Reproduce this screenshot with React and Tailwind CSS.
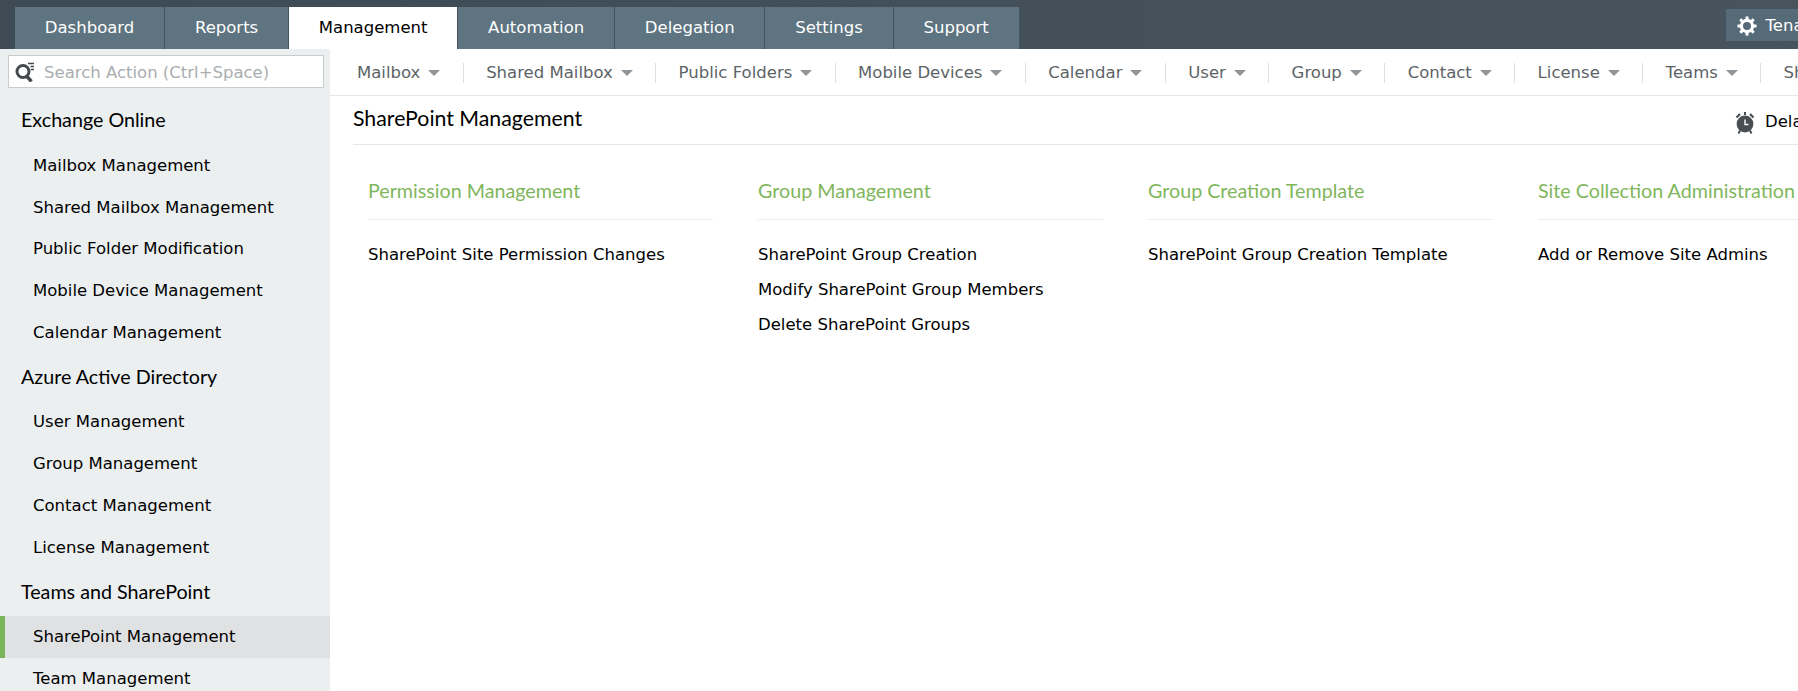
import React from 'react';

const TABS = ['Dashboard', 'Reports', 'Management', 'Automation', 'Delegation', 'Settings', 'Support'];
const SUBNAV = ['Mailbox', 'Shared Mailbox', 'Public Folders', 'Mobile Devices', 'Calendar', 'User', 'Group', 'Contact', 'License', 'Teams', 'SharePoint'];

const SIDEBAR = [
  { title: 'Exchange Online', items: ['Mailbox Management', 'Shared Mailbox Management', 'Public Folder Modification', 'Mobile Device Management', 'Calendar Management'] },
  { title: 'Azure Active Directory', items: ['User Management', 'Group Management', 'Contact Management', 'License Management'] },
  { title: 'Teams and SharePoint', items: ['SharePoint Management', 'Team Management'] },
];

const COLUMNS = [
  { title: 'Permission Management', items: ['SharePoint Site Permission Changes'] },
  { title: 'Group Management', items: ['SharePoint Group Creation', 'Modify SharePoint Group Members', 'Delete SharePoint Groups'] },
  { title: 'Group Creation Template', items: ['SharePoint Group Creation Template'] },
  { title: 'Site Collection Administration', items: ['Add or Remove Site Admins'] },
];

const SearchIcon = () => (
  <svg width="20" height="20" viewBox="0 0 20 20" className="shrink-0">
    <circle cx="8" cy="9.5" r="6" fill="none" stroke="#45494c" strokeWidth="3" />
    <path d="M11.5 14 L16.5 19.5" stroke="#45494c" strokeWidth="3.4" />
    <path d="M13 1.5h6M15.5 4.5h3.5M16 7.5h3" stroke="#45494c" strokeWidth="1.3" />
  </svg>
);

const GearIcon = () => (
  <svg width="20" height="20" viewBox="0 0 20 20" className="shrink-0">
    <circle cx="10" cy="10" r="5.6" fill="none" stroke="#fff" strokeWidth="3.2" />
    <path d="M10 0.5v3.5M10 16v3.5M0.5 10h3.5M16 10h3.5M3.3 3.3l2.4 2.4M14.3 14.3l2.4 2.4M16.7 3.3l-2.4 2.4M5.7 14.3l-2.4 2.4" stroke="#fff" strokeWidth="3" />
  </svg>
);

const ClockIcon = () => (
  <svg width="20" height="22" viewBox="0 0 20 22" className="shrink-0">
    <circle cx="10" cy="12" r="8.4" fill="#484e52" />
    <path d="M1.5 5.5 L5 2 M18.5 5.5 L15 2" stroke="#484e52" strokeWidth="2.2" />
    <path d="M9 0h2v3H9z" fill="#484e52" />
    <path d="M5 18.5l-1.5 3M15 18.5l1.5 3" stroke="#484e52" strokeWidth="2" />
    <path d="M10 7.5V12.5H13.5" stroke="#fff" strokeWidth="1.4" fill="none" />
  </svg>
);

export default function App() {
  return (
    <div className="w-[1798px] h-[691px] overflow-hidden bg-white flex flex-col font-['DejaVu_Sans',sans-serif] text-[16.5px]">
      {/* Top tabs */}
      <div className="h-[49px] shrink-0 flex items-end pl-[15px] bg-gradient-to-r from-[#3f4b54] to-[#47545d]">
        {TABS.map((t) => (
          <div
            key={t}
            className={`h-[42px] flex items-center justify-center px-[29.8px] border-r border-[#44525c] whitespace-nowrap ${
              t === 'Management' ? 'bg-white text-black' : 'bg-[#5e7480] text-white'
            }`}
          >
            {t}
          </div>
        ))}
        <div className="ml-[706px] mb-[8px] h-[32px] pt-[2px] flex items-center gap-[9px] pl-[11px] w-[200px] shrink-0 bg-[#566b78] text-white whitespace-nowrap">
          <GearIcon />
          Tenant Settings
        </div>
      </div>

      <div className="flex-1 flex min-h-0">
        {/* Sidebar */}
        <aside className="w-[330px] shrink-0 bg-[#ebeff0]">
          <div className="mt-[6px] ml-[8px] w-[316px] h-[33px] bg-white border border-[#c8cccd] flex items-center pl-[6px] gap-[9px]">
            <SearchIcon />
            <span className="pt-[3px] text-[#a9adaf] whitespace-nowrap">Search Action (Ctrl+Space)</span>
          </div>
          <div className="mt-[10px]">
            {SIDEBAR.map((g) => (
              <div key={g.title}>
                <div className="h-[47px] pb-[3px] flex items-center pl-[21px] font-['Lato',sans-serif] text-[19.7px] text-black">{g.title}</div>
                {g.items.map((it) => (
                  <div
                    key={it}
                    className={`h-[41.95px] flex items-center whitespace-nowrap text-black ${
                      it === 'SharePoint Management' ? 'bg-[#e0e1e2] border-l-[5px] border-[#7ab55c] pl-[28px]' : 'pl-[33px]'
                    }`}
                  >
                    {it}
                  </div>
                ))}
              </div>
            ))}
          </div>
        </aside>

        <main className="flex-1 min-w-0">
          {/* Sub navigation */}
          <div className="h-[47px] pt-[2px] flex items-center pl-[27px] border-b border-[#e4e6e7] text-[#5c6366] whitespace-nowrap">
            {SUBNAV.map((s, i) => (
              <div key={s} className="flex items-center shrink-0">
                <span>{s}</span>
                <span className="ml-[8px] w-0 h-0 border-x-[6px] border-t-[6px] border-x-transparent border-t-[#8f9498]" />
                {i < SUBNAV.length - 1 && <span className="mx-[22.4px] w-px h-[20px] bg-[#dcdfe0]" />}
              </div>
            ))}
          </div>

          {/* Page title */}
          <div className="ml-[23px] h-[49px] flex items-center justify-between border-b border-[#e4e6e7] whitespace-nowrap overflow-hidden">
            <div className="pb-[3px] font-['Lato',sans-serif] text-[21.3px] text-black">SharePoint Management</div>
            <div className="pt-[5px] flex items-center gap-[10px] w-[63px] shrink-0 text-black">
              <ClockIcon />
              Delayed Tasks
            </div>
          </div>

          {/* Action columns */}
          <div className="ml-[38px] mt-[28px] flex gap-[45px]">
            {COLUMNS.map((c) => (
              <div key={c.title} className="w-[345px] shrink-0">
                <div className="h-[47px] pb-[11px] flex items-center border-b border-[#eceeef] font-['Lato',sans-serif] text-[19.7px] text-[#7fb65c] whitespace-nowrap">{c.title}</div>
                <div className="mt-[17.5px]">
                  {c.items.map((it) => (
                    <div key={it} className="h-[35px] flex items-center text-black whitespace-nowrap">{it}</div>
                  ))}
                </div>
              </div>
            ))}
          </div>
        </main>
      </div>
    </div>
  );
}
